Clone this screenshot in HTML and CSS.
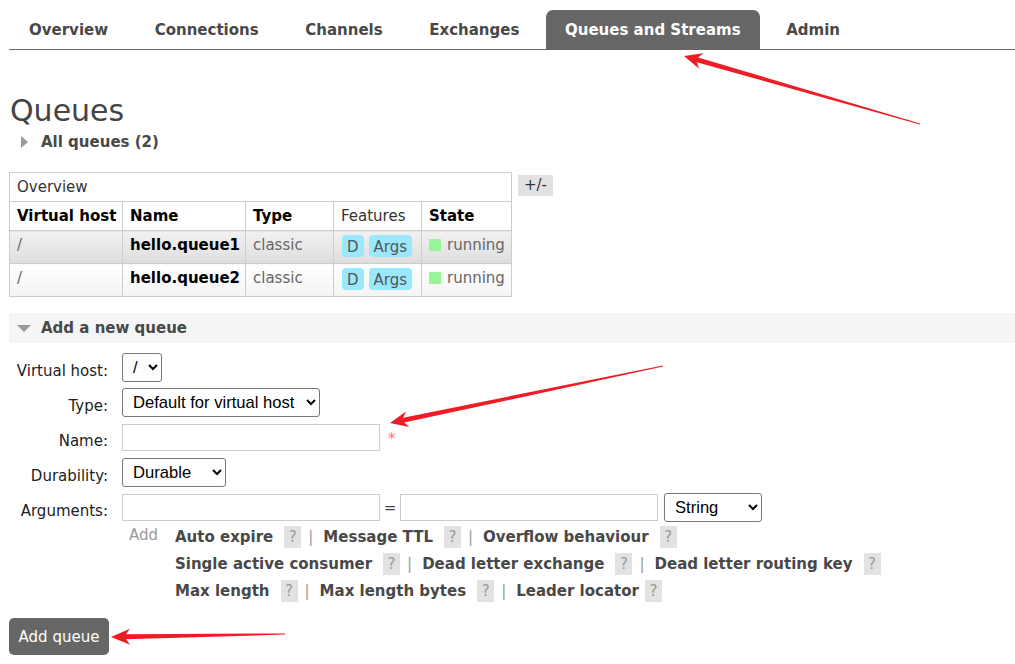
FILE: index.html
```html
<!DOCTYPE html>
<html>
<head>
<meta charset="utf-8">
<title>Queues</title>
<link rel="stylesheet" href="styles.css">
</head>
<body>
<div class="page">
  <ul class="nav">
    <li class="tab">Overview</li>
    <li class="tab">Connections</li>
    <li class="tab">Channels</li>
    <li class="tab">Exchanges</li>
    <li class="tab active">Queues and Streams</li>
    <li class="tab">Admin</li>
  </ul>

  <h1 class="title">Queues</h1>
  <div class="toggle"><span class="tri-right"></span>All queues (2)</div>

  <div class="list-wrap">
    <table class="list">
      <colgroup>
        <col class="c1"><col class="c2"><col class="c3"><col class="c4"><col class="c5">
      </colgroup>
      <thead>
        <tr class="group-row"><th colspan="5" class="group">Overview</th></tr>
        <tr class="head-row"><th>Virtual host</th><th>Name</th><th>Type</th><th class="plain">Features</th><th>State</th></tr>
      </thead>
      <tbody>
        <tr class="alt1">
          <td class="muted">/</td>
          <td class="strong">hello.queue1</td>
          <td class="muted">classic</td>
          <td class="feat"><span class="badge">D</span><span class="badge">Args</span></td>
          <td class="muted"><span class="dot"></span>running</td>
        </tr>
        <tr class="alt2">
          <td class="muted">/</td>
          <td class="strong">hello.queue2</td>
          <td class="muted">classic</td>
          <td class="feat"><span class="badge">D</span><span class="badge">Args</span></td>
          <td class="muted"><span class="dot"></span>running</td>
        </tr>
      </tbody>
    </table>
    <span class="pm">+/-</span>
  </div>

  <div class="section-head"><span class="tri-down"></span>Add a new queue</div>

  <form class="qform">
    <label class="lbl">Virtual host:</label>
    <div class="ctl"><select class="sel sel-vhost"><option>/</option></select></div>

    <label class="lbl">Type:</label>
    <div class="ctl"><select class="sel sel-type"><option>Default for virtual host</option></select></div>

    <label class="lbl">Name:</label>
    <div class="ctl"><input class="txt" type="text"><span class="mand">*</span></div>

    <label class="lbl">Durability:</label>
    <div class="ctl"><select class="sel sel-dur"><option>Durable</option></select></div>

    <label class="lbl">Arguments:</label>
    <div class="ctl"><input class="txt" type="text"><span class="eq">=</span><input class="txt" type="text"><select class="sel sel-str"><option>String</option></select></div>
  </form>

  <div class="args-help">
    <span class="add">Add</span>
    <div class="help-lines">
      <div class="help-line">
        <span class="arg">Auto expire</span><span class="q">?</span><span class="sep">|</span>
        <span class="arg">Message TTL</span><span class="q">?</span><span class="sep">|</span>
        <span class="arg">Overflow behaviour</span><span class="q">?</span>
      </div>
      <div class="help-line">
        <span class="arg">Single active consumer</span><span class="q">?</span><span class="sep">|</span>
        <span class="arg">Dead letter exchange</span><span class="q">?</span><span class="sep">|</span>
        <span class="arg">Dead letter routing key</span><span class="q">?</span>
      </div>
      <div class="help-line">
        <span class="arg">Max length</span><span class="q">?</span><span class="sep">|</span>
        <span class="arg">Max length bytes</span><span class="q">?</span><span class="sep">|</span>
        <span class="arg tight">Leader locator</span><span class="q">?</span>
      </div>
    </div>
  </div>

  <button class="submit" type="button">Add queue</button>
</div>

<svg class="annot" width="1015" height="664" viewBox="0 0 1015 664" aria-hidden="true">
  <polygon points="684,56 703.5,53.3 698.1,57.5 920.1,123.5 919.9,124.5 696.8,62.3 699.1,68.7"/>
  <polygon points="390,423 405.9,411.5 403.2,417.7 662.9,365.4 663.1,366.6 404.2,422.6 409.3,427.1"/>
  <polygon points="111,637 129.9,628.7 126,634.3 285,633.4 285,634.6 126,639.3 130.1,644.7"/>
</svg>
</body>
</html>
```

FILE: styles.css
```css
html, body {
  margin: 0;
  padding: 0;
  background: #fff;
}

body {
  font-family: "DejaVu Sans", Verdana, sans-serif;
  font-size: 15px;
  color: #484848;
  position: relative;
}

.page {
  padding-left: 9px;
}

/* nav */
.nav {
  list-style: none;
  margin: 10px 0 0 0;
  padding: 0;
  display: flex;
  gap: 6.6px;
  border-bottom: 1px solid #666;
}

.tab {
  padding: 2px 20px 0;
  height: 37px;
  line-height: 37px;
  font-weight: bold;
  color: #484848;
  border-radius: 7px 7px 0 0;
}

.tab.active {
  background: #666;
  color: #fff;
  padding: 2px 19px 0;
}

/* title */
.title {
  margin: 43px 0 0 1px;
  font-size: 30px;
  font-weight: normal;
  line-height: 36px;
  color: #444;
}

.toggle {
  display: flex;
  align-items: center;
  margin: 2px 0 0 12px;
  height: 22px;
  font-weight: bold;
  color: #484848;
}

.tri-right {
  width: 0;
  height: 0;
  border-top: 6px solid transparent;
  border-bottom: 6px solid transparent;
  border-left: 7px solid #999;
  margin-right: 13px;
}

/* list */
.list-wrap {
  display: flex;
  align-items: flex-start;
  gap: 6px;
  margin-top: 19px;
}

.list {
  border-collapse: collapse;
  table-layout: fixed;
  width: 503px;
  border: 1px solid #ccc;
}

.c1 { width: 113px; }
.c2 { width: 123px; }
.c3 { width: 88px; }
.c4 { width: 88px; }
.c5 { width: 90px; }

.list th, .list td {
  border: 1px solid #ccc;
  text-align: left;
  padding: 0 7px;
  white-space: nowrap;
}

.group-row th {
  height: 28px;
  font-weight: normal;
  color: #333;
}

.head-row th {
  height: 28px;
  color: #000;
  font-weight: bold;
}

.head-row th.plain {
  font-weight: normal;
  color: #333;
}

.list td {
  height: 33px;
  vertical-align: top;
  padding-top: 3px;
  line-height: 22px;
  box-sizing: border-box;
}

.alt1 td {
  background: linear-gradient(#f1f1f1, #dedede);
}

.alt2 td {
  background: linear-gradient(#ffffff, #f3f3f3);
}

.muted { color: #666; }
.strong { color: #000; font-weight: bold; }

.list td.feat {
  padding-top: 4px;
  padding-left: 8px;
}

.badge {
  display: inline-block;
  height: 22px;
  line-height: 24px;
  padding: 0 5px;
  margin-right: 5px;
  background: #99e8fc;
  border-radius: 4px;
  color: #555;
}

.dot {
  display: inline-block;
  width: 12px;
  height: 12px;
  background: #98f498;
  margin-right: 6px;
  vertical-align: -1px;
}

.pm {
  margin-top: 3px;
  background: #e2e2e2;
  color: #333;
  height: 21px;
  line-height: 21px;
  padding: 0 6px;
}

/* add section */
.section-head {
  display: flex;
  align-items: center;
  margin-top: 16px;
  height: 30px;
  background: #f5f5f5;
  font-weight: bold;
  color: #484848;
  padding-left: 8px;
}

.tri-down {
  width: 0;
  height: 0;
  border-left: 7px solid transparent;
  border-right: 7px solid transparent;
  border-top: 7px solid #999;
  margin-right: 10px;
}

.qform {
  display: grid;
  grid-template-columns: 99px auto;
  column-gap: 14px;
  row-gap: 6px;
  grid-auto-rows: 29px;
  margin-top: 10px;
  margin-left: 0;
}

.lbl {
  text-align: right;
  line-height: 18px;
  padding-top: 9px;
  color: #222;
}

.ctl {
  display: flex;
  align-items: center;
}

.sel {
  height: 29px;
  font-family: "Liberation Sans", Arial, sans-serif;
  font-size: 16.6px;
  color: #000;
  border: 1px solid #767676;
  border-radius: 3px;
  background: #fff;
  padding: 0 2px 0 6px;
  margin: 0;
  box-sizing: border-box;
}

.sel-vhost { width: 40px; }
.sel-type { width: 198px; }
.sel-dur { width: 104px; }
.sel-str { width: 98px; margin-left: 6px; }

.txt {
  width: 258px;
  height: 27px;
  box-sizing: border-box;
  border: 1px solid #ccc;
  margin: 0;
  padding: 0 4px;
  background: #fff;
}

.mand {
  color: #f77;
  margin-left: 8px;
  margin-top: 2px;
}

.eq {
  width: 20px;
  text-align: center;
  color: #444;
}

/* argument help */
.args-help {
  display: flex;
  margin-top: 4px;
  margin-left: 120px;
}

.add {
  color: #999;
  width: 46px;
  line-height: 18px;
}

.help-lines {
  display: flex;
  flex-direction: column;
  gap: 5px;
}

.help-line {
  display: flex;
  align-items: center;
  height: 22px;
}

.arg {
  font-weight: bold;
  color: #484848;
  margin-right: 11px;
}

.arg.tight {
  margin-right: 6px;
}

.q {
  display: inline-block;
  width: 17px;
  height: 22px;
  line-height: 22px;
  text-align: center;
  background: #e2e2e2;
  color: #999;
}

.sep {
  color: #999;
  margin: 0 10px 0 7px;
}

.submit {
  display: block;
  margin-top: 16px;
  width: 100px;
  height: 37px;
  background: #666;
  color: #fff;
  border: none;
  border-radius: 5px;
  font-family: "DejaVu Sans", Verdana, sans-serif;
  font-size: 15px;
  padding: 0;
}

/* annotations */
.annot {
  position: absolute;
  left: 0;
  top: 0;
  pointer-events: none;
}

.annot polygon {
  fill: #ee1c25;
}
```
